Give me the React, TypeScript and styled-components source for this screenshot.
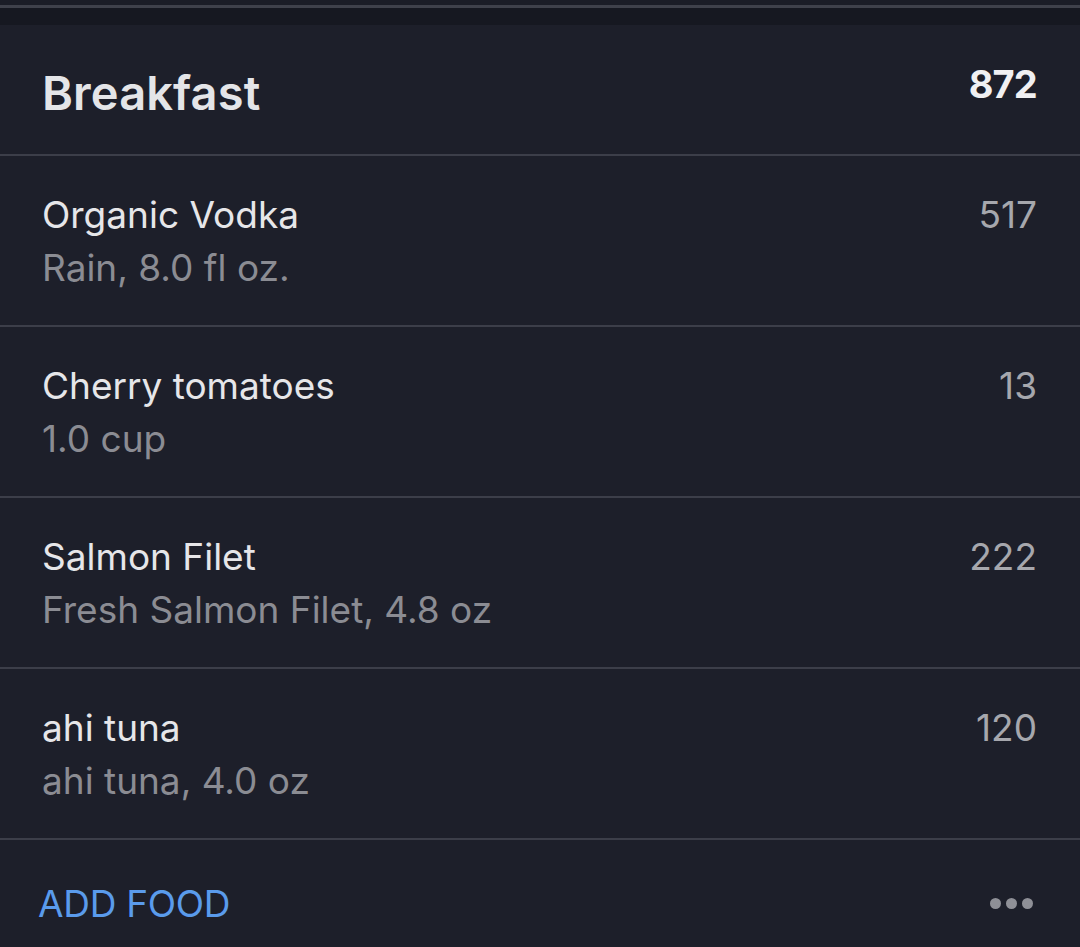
import React from "react";
import styled, { createGlobalStyle } from "styled-components";

const Global = createGlobalStyle`
  html, body { margin: 0; padding: 0; background: #1d1f2a; }
  body { font-family: Inter, "Noto Sans", "Liberation Sans", sans-serif; overflow: hidden; }
  * { box-sizing: border-box; }
`;

const Page = styled.div`
  width: 1080px;
  height: 947px;
  background: #1d1f2a;
  display: flex;
  flex-direction: column;
  overflow: hidden;
`;

const TopStrip = styled.div`
  height: 25px;
  background: #161821;
  border-top: 5px solid #1b1d27;
  display: flex;
  flex-direction: column;
`;

const TopLine = styled.div`
  height: 3px;
  background: #3f414b;
`;

const Card = styled.section`
  background: #1d1f2a;
  display: flex;
  flex-direction: column;
`;

const Divider = styled.div`
  height: 2px;
  background: #3c3e49;
`;

const Header = styled.div`
  height: 129px;
  padding: 0 43px 0 42px;
  display: flex;
  justify-content: space-between;
  align-items: flex-start;
`;

const Title = styled.h2`
  margin: 40px 0 0;
  font-size: 47px;
  line-height: 56px;
  font-weight: 600;
  color: #e4e5e8;
  letter-spacing: 0.1px;
`;

const Total = styled.div`
  margin-top: 36px;
  font-size: 38px;
  line-height: 46px;
  font-weight: 700;
  color: #f0f0f2;
  letter-spacing: -0.8px;
`;

const Row = styled.div`
  height: 169px;
  padding: 32px 43px 0 42px;
  display: flex;
  justify-content: space-between;
  align-items: flex-start;
`;

const Info = styled.div`
  display: flex;
  flex-direction: column;
`;

const Line = styled.div<{ $muted?: boolean }>`
  font-size: 37px;
  line-height: 53px;
  font-weight: 400;
  color: ${(p) => (p.$muted ? "#8b8c93" : "#e6e6e9")};
  white-space: nowrap;
`;

const Cal = styled.div`
  font-size: 37px;
  line-height: 53px;
  color: #a6a7ad;
`;

const Footer = styled.div`
  flex: 1;
  padding: 37px 47px 0 38px;
  display: flex;
  justify-content: space-between;
  align-items: flex-start;
`;

const AddFood = styled.button`
  background: none;
  border: none;
  padding: 0;
  font-family: inherit;
  font-size: 37px;
  line-height: 53px;
  color: #5a9bec;
  letter-spacing: -0.3px;
`;

const Dots = styled.div`
  height: 53px;
  display: flex;
  align-items: center;
  gap: 5px;
`;

const Dot = styled.span`
  width: 11px;
  height: 11px;
  border-radius: 50%;
  background: #8f9097;
`;

const foods = [
  { name: "Organic Vodka", detail: "Rain, 8.0 fl oz.", cal: 517 },
  { name: "Cherry tomatoes", detail: "1.0 cup", cal: 13 },
  { name: "Salmon Filet", detail: "Fresh Salmon Filet, 4.8 oz", cal: 222 },
  { name: "ahi tuna", detail: "ahi tuna, 4.0 oz", cal: 120 },
];

export default function App() {
  return (
    <Page>
      <Global />
      <TopStrip>
        <TopLine />
      </TopStrip>
      <Card>
        <Header>
          <Title>Breakfast</Title>
          <Total>872</Total>
        </Header>
        <Divider />
        {foods.map((f) => (
          <React.Fragment key={f.name}>
            <Row>
              <Info>
                <Line>{f.name}</Line>
                <Line $muted>{f.detail}</Line>
              </Info>
              <Cal>{f.cal}</Cal>
            </Row>
            <Divider />
          </React.Fragment>
        ))}
      </Card>
      <Footer>
        <AddFood>ADD FOOD</AddFood>
        <Dots>
          <Dot />
          <Dot />
          <Dot />
        </Dots>
      </Footer>
    </Page>
  );
}
